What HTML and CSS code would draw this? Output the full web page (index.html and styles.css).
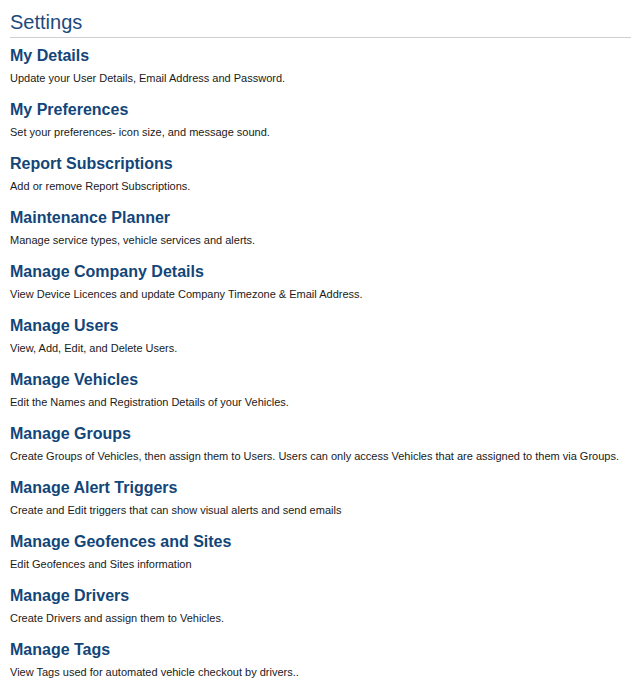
FILE: index.html
```html
<!DOCTYPE html>
<html>
<head>
<meta charset="utf-8">
<link rel="stylesheet" href="styles.css">
</head>
<body>
<div class="page">
  <h1 class="title">Settings</h1>
  <div class="list">
    <div class="item"><h3 class="item-title">My Details</h3><p class="item-desc">Update your User Details, Email Address and Password.</p></div>
    <div class="item"><h3 class="item-title">My Preferences</h3><p class="item-desc">Set your preferences- icon size, and message sound.</p></div>
    <div class="item"><h3 class="item-title">Report Subscriptions</h3><p class="item-desc">Add or remove Report Subscriptions.</p></div>
    <div class="item"><h3 class="item-title">Maintenance Planner</h3><p class="item-desc">Manage service types, vehicle services and alerts.</p></div>
    <div class="item"><h3 class="item-title">Manage Company Details</h3><p class="item-desc">View Device Licences and update Company Timezone &amp; Email Address.</p></div>
    <div class="item"><h3 class="item-title">Manage Users</h3><p class="item-desc">View, Add, Edit, and Delete Users.</p></div>
    <div class="item"><h3 class="item-title">Manage Vehicles</h3><p class="item-desc">Edit the Names and Registration Details of your Vehicles.</p></div>
    <div class="item"><h3 class="item-title">Manage Groups</h3><p class="item-desc">Create Groups of Vehicles, then assign them to Users. Users can only access Vehicles that are assigned to them via Groups.</p></div>
    <div class="item"><h3 class="item-title">Manage Alert Triggers</h3><p class="item-desc">Create and Edit triggers that can show visual alerts and send emails</p></div>
    <div class="item"><h3 class="item-title">Manage Geofences and Sites</h3><p class="item-desc">Edit Geofences and Sites information</p></div>
    <div class="item"><h3 class="item-title">Manage Drivers</h3><p class="item-desc">Create Drivers and assign them to Vehicles.</p></div>
    <div class="item"><h3 class="item-title">Manage Tags</h3><p class="item-desc">View Tags used for automated vehicle checkout by drivers..</p></div>
  </div>
</div>
</body>
</html>
```
FILE: styles.css
```css
html, body {
  margin: 0;
  padding: 0;
  background: #fff;
}
body {
  font-family: "Liberation Sans", Arial, sans-serif;
  color: #1a1a1a;
}
.page {
  padding: 11px 0 0 10px;
}
.title {
  margin: 0;
  font-size: 20px;
  line-height: 22px;
  font-weight: normal;
  color: #1c4b7c;
  padding-bottom: 4px;
  border-bottom: 1px solid #cfcfcf;
}
.list {
  display: flex;
  flex-direction: column;
  gap: 14px;
  padding-top: 8px;
}
.item-title {
  margin: 0;
  font-size: 16px;
  line-height: 20px;
  font-weight: bold;
  color: #124679;
}
.item-desc {
  margin: 5px 0 0;
  font-size: 11px;
  line-height: 15px;
  color: #1a1a1a;
}
```
